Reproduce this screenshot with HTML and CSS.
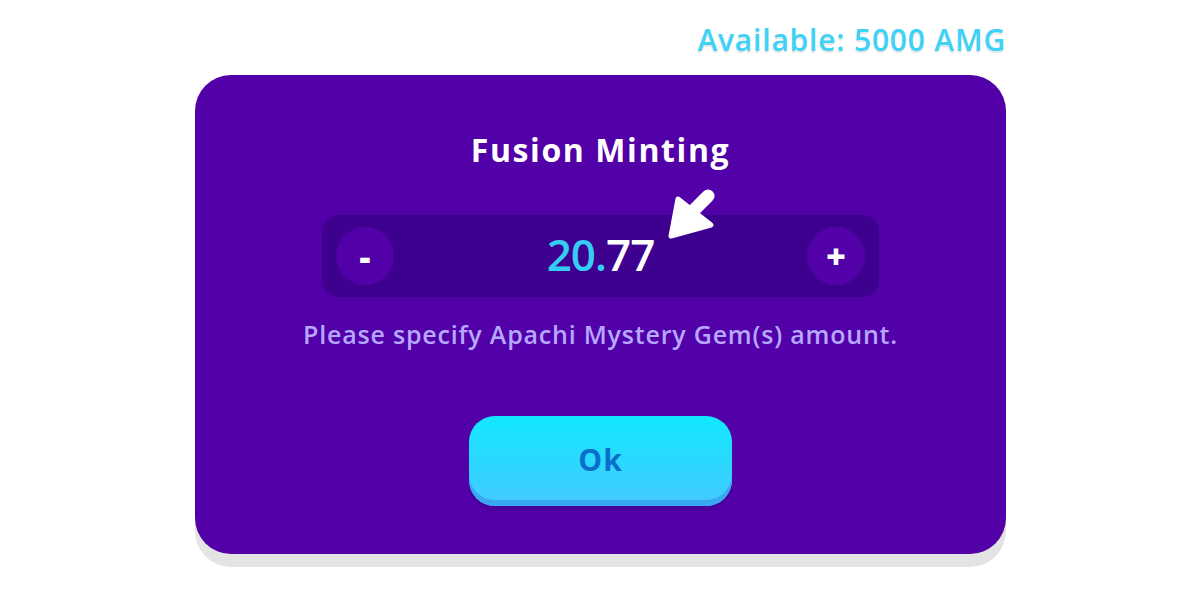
FILE: index.html
```html
<!DOCTYPE html>
<html>
<head>
<meta charset="utf-8">
<link rel="stylesheet" href="styles.css">
</head>
<body>
<div class="wrap">
  <div class="available">Available: 5000 AMG</div>
  <div class="card-shell">
    <div class="card">
      <h1 class="title">Fusion Minting</h1>
      <div class="stepper">
        <button class="circle">-</button>
        <div class="value"><span class="int">20.</span><span class="dec">77</span></div>
        <button class="circle">+</button>
        <svg class="pointer" width="64" height="64" viewBox="0 0 64 64">
          <line x1="48" y1="11" x2="30" y2="29" stroke="#fff" stroke-width="13" stroke-linecap="round"/>
          <polygon points="11,51 18,14 51,40" fill="#fff" stroke="#fff" stroke-width="5" stroke-linejoin="round"/>
        </svg>
      </div>
      <p class="hint">Please specify Apachi Mystery Gem(s) amount.</p>
      <button class="ok">Ok</button>
    </div>
  </div>
</div>
</body>
</html>
```
FILE: styles.css
```css
html, body {
  margin: 0;
  padding: 0;
  background: #ffffff;
}
body {
  font-family: "Open Sans", "Noto Sans", sans-serif;
}
.wrap {
  width: 811px;
  margin-left: 195px;
  display: flex;
  flex-direction: column;
}
.available {
  align-self: flex-end;
  margin-right: 0;
  height: 75px;
  box-sizing: border-box;
  padding-top: 23px;
  font-size: 30px;
  line-height: 34px;
  font-weight: 600;
  letter-spacing: 0.8px;
  color: #3fd2f7;
  text-shadow: 0 2px 1px rgba(0,0,0,0.1);
}
.card-shell {
  background: #e4e4e4;
  border-radius: 36px;
  padding-bottom: 13px;
}
.card {
  background: #5200a8;
  border-radius: 36px;
  height: 479px;
  box-sizing: border-box;
  padding-top: 55px;
  display: flex;
  flex-direction: column;
  align-items: center;
}
.title {
  margin: 0;
  font-size: 32px;
  line-height: 40px;
  font-weight: 700;
  letter-spacing: 1.6px;
  color: #ffffff;
}
.stepper {
  position: relative;
  margin-top: 45px;
  width: 557px;
  height: 82px;
  box-sizing: border-box;
  padding: 0 14px;
  background: #3e008e;
  border-radius: 16px;
  display: flex;
  align-items: center;
  justify-content: space-between;
}
.circle {
  width: 58px;
  height: 58px;
  border: 0;
  padding: 0;
  border-radius: 50%;
  background: #5200a8;
  color: #ffffff;
  font-family: inherit;
  font-size: 34px;
  font-weight: 800;
  line-height: 58px;
}
.value {
  font-size: 44px;
  font-weight: 600;
  line-height: 78px;
  padding-bottom: 4px;
  letter-spacing: -1px;
  padding-left: 0;
}
.int { color: #36cdf5; }
.dec { color: #ffffff; }
.pointer {
  position: absolute;
  left: 338px;
  top: -30px;
}
.hint {
  margin: 22px 0 0;
  font-size: 25px;
  line-height: 30px;
  font-weight: 600;
  letter-spacing: 0.8px;
  color: #b6a7ff;
}
.ok {
  margin-top: 67px;
  width: 263px;
  height: 90px;
  border: 0;
  border-radius: 26px;
  background: linear-gradient(#11e8ff, #45c9ff);
  box-shadow: inset 0 -6px 0 #38a8f2, 0 5px 0 #4a009b;
  color: #0b6fc9;
  font-family: inherit;
  font-size: 30px;
  font-weight: 700;
  letter-spacing: 1px;
  padding: 0 0 4px;
}
```
